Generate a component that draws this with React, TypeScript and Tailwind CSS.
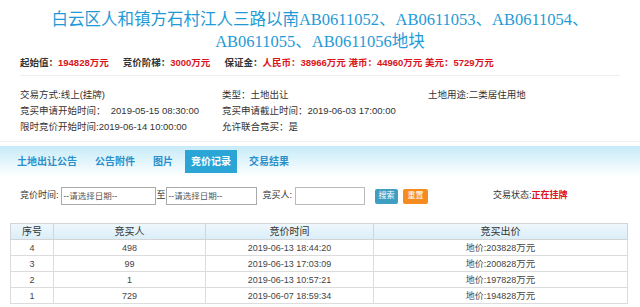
import React from "react";

const ROWS = [
  { no: 4, bidder: "498", time: "2019-06-13 18:44:20", price: "203828" },
  { no: 3, bidder: "99", time: "2019-06-13 17:03:09", price: "200828" },
  { no: 2, bidder: "1", time: "2019-06-13 10:57:21", price: "197828" },
  { no: 1, bidder: "729", time: "2019-06-07 18:59:34", price: "194828" },
];

const TABS = [
  { label: "土地出让公告", active: false },
  { label: "公告附件", active: false },
  { label: "图片", active: false },
  { label: "竞价记录", active: true },
  { label: "交易结果", active: false },
];

const sans = { fontFamily: '"Liberation Sans", "Noto Sans CJK SC", sans-serif' };

export default function App() {
  return (
    <div className="w-[640px] h-[307px] overflow-hidden bg-white text-[#333]" style={sans}>
      {/* 标题 */}
      <h1
        className="pt-[9px] px-[40px] text-center text-[16.5px] leading-[22px] text-[#1f9ad6]"
        style={{ fontFamily: '"Liberation Serif", "Noto Sans CJK SC", serif' }}
      >
        白云区人和镇方石村江人三路以南AB0611052、AB0611053、AB0611054、AB0611055、AB0611056地块
      </h1>

      {/* 价格信息 */}
      <div className="mt-[2px] mx-[20px] h-[16px] flex items-center text-[9.5px] font-bold leading-none border-b border-[#eeeeee] pb-[4px] box-content">
        <span>起始值：</span>
        <span className="text-[#d9141c]">194828万元</span>
        <span className="ml-[14px]">竞价阶梯：</span>
        <span className="text-[#d9141c]">3000万元</span>
        <span className="ml-[14px]">保证金：</span>
        <span className="text-[#d9141c]">人民币：38966万元 港币：44960万元 美元：5729万元</span>
      </div>

      {/* 交易信息 */}
      <div className="pt-[11px] px-[20px] text-[9.5px] leading-[16px] text-[#333]">
        <div className="flex">
          <span className="w-[202px]">交易方式:线上(挂牌)</span>
          <span className="w-[206px]">类型：土地出让</span>
          <span>土地用途:二类居住用地</span>
        </div>
        <div className="flex">
          <span className="w-[202px]">竞买申请开始时间：&nbsp; 2019-05-15 08:30:00</span>
          <span>竞买申请截止时间：2019-06-03 17:00:00</span>
        </div>
        <div className="flex">
          <span className="w-[202px]">限时竞价开始时间:2019-06-14 10:00:00</span>
          <span>允许联合竞买：是</span>
        </div>
      </div>

      {/* 标签栏 */}
      <div className="mt-[6px] border-t border-[#eef3f5]" />
      <div className="mt-[4px] h-[31px] flex items-center pl-[11px] bg-gradient-to-b from-[#c6ebf8] to-white">
        {TABS.map((t) => (
          <div
            key={t.label}
            className={`h-[23px] px-[6px] mr-[6px] flex items-center text-[10px] font-bold ${
              t.active ? "bg-[#2aa5d5] text-white" : "text-[#2a8fca]"
            }`}
          >
            {t.label}
          </div>
        ))}
      </div>

      {/* 搜索 */}
      <div className="mt-[10px] h-[18px] flex items-center pl-[20px] text-[9px]">
        <span>竞价时间:</span>
        <div className="ml-[2px] w-[95px] h-[18px] border border-[#aaa] flex items-center pl-[2px] text-[8.5px] text-[#555]">
          --请选择日期--
        </div>
        <span className="ml-[1px]">至</span>
        <div className="w-[91px] h-[18px] border border-[#aaa] flex items-center pl-[2px] text-[8.5px] text-[#555]">
          --请选择日期--
        </div>
        <span className="ml-[6px]">竞买人:</span>
        <div className="ml-[3px] w-[70px] h-[18px] border border-[#bbb]" />
        <button className="ml-[10px] w-[23px] h-[15px] rounded-[2px] bg-[#3e9fc3] text-white text-[8px] leading-none">
          搜索
        </button>
        <button className="ml-[5px] w-[25px] h-[15px] rounded-[2px] bg-[#f68b1f] text-white text-[8px] leading-none">
          重置
        </button>
        <span className="ml-[65px]">交易状态:</span>
        <span className="text-[#e0101a] font-bold">正在挂牌</span>
      </div>

      {/* 竞价记录表 */}
      <table className="mt-[18px] ml-[10px] w-[618px] border-collapse table-fixed text-[9px] leading-[14px] text-[#444]">
        <colgroup>
          <col className="w-[43px]" />
          <col className="w-[152px]" />
          <col className="w-[168px]" />
          <col />
        </colgroup>
        <thead>
          <tr className="h-[16px] bg-gradient-to-b from-[#eef7fc] to-[#d9edf8] text-[10px] text-[#333]">
            <th className="p-0 border border-[#d4d4d4] font-normal">序号</th>
            <th className="p-0 border border-[#d4d4d4] font-normal">竞买人</th>
            <th className="p-0 border border-[#d4d4d4] font-normal">竞价时间</th>
            <th className="p-0 border border-[#d4d4d4] font-normal">竞买出价</th>
          </tr>
        </thead>
        <tbody>
          {ROWS.map((r) => (
            <tr key={r.no} className="h-[16px] text-center">
              <td className="p-0 border border-[#dcdcdc]">{r.no}</td>
              <td className="p-0 border border-[#dcdcdc]">{r.bidder}</td>
              <td className="p-0 border border-[#dcdcdc]">{r.time}</td>
              <td className="p-0 border border-[#dcdcdc]">
                地价:{r.price}
                <span className="text-[9.5px]">万元</span>
              </td>
            </tr>
          ))}
        </tbody>
      </table>
    </div>
  );
}
